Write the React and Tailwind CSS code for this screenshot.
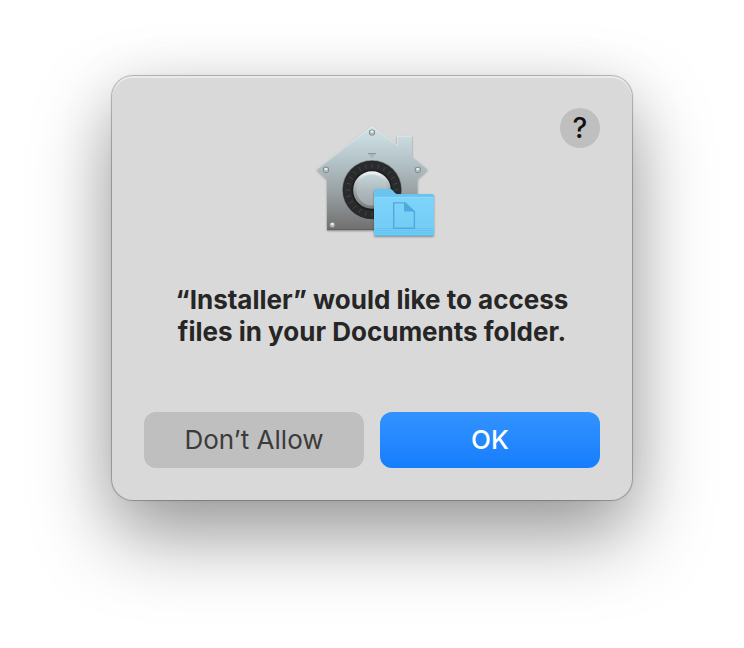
import React from 'react';

const screws = [
  { x: 64, y: 16.5 },
  { x: 18, y: 53.8 },
  { x: 109.8, y: 53.8 },
  { x: 24.3, y: 108.8 },
];

const ticks = Array.from({ length: 24 }, (_, i) => (i * 360) / 24);

const DocumentsIcon = () => (
  <svg viewBox="0 0 128 128" className="mt-2 h-32 w-32" aria-hidden="true">
    <defs>
      <linearGradient id="house" x1="0" y1="0" x2="0" y2="1">
        <stop offset="0" stopColor="#d3e6ea" />
        <stop offset="0.35" stopColor="#b3c2c7" />
        <stop offset="0.65" stopColor="#979fa2" />
        <stop offset="1" stopColor="#716e6d" />
      </linearGradient>
      <linearGradient id="rim" x1="0" y1="0" x2="0" y2="1">
        <stop offset="0" stopColor="#f4fafb" />
        <stop offset="0.25" stopColor="#c3cbce" />
        <stop offset="0.6" stopColor="#969c9f" />
        <stop offset="1" stopColor="#7b7e80" />
      </linearGradient>
      <linearGradient id="knob" x1="0" y1="0" x2="0" y2="1">
        <stop offset="0" stopColor="#c4d5da" />
        <stop offset="0.5" stopColor="#b0bbbf" />
        <stop offset="1" stopColor="#a2a8ab" />
      </linearGradient>
      <linearGradient id="folder" x1="0" y1="0" x2="0" y2="1">
        <stop offset="0" stopColor="#7ed3fa" />
        <stop offset="1" stopColor="#70cbf5" />
      </linearGradient>
      <filter id="drop" x="-10%" y="-10%" width="120%" height="120%">
        <feDropShadow dx="0" dy="1" stdDeviation="1" floodColor="#000" floodOpacity="0.35" />
      </filter>
    </defs>

    {/* House */}
    <path
      d="M64 9.7 L89 28.7 V19.7 H104 V41 L119.6 53.5 L109.5 63 V114 H19 V63 L8.7 53.5 Z"
      fill="url(#house)"
      filter="url(#drop)"
    />
    <path d="M9.5 53 L64 10.4 L89.4 29.7 V20.2 H103.6" fill="none" stroke="#e7f4f7" strokeOpacity="0.6" strokeWidth="0.8" />
    <path d="M19 113.6 H70" stroke="#5c5b5b" strokeWidth="0.8" />

    {screws.map((s) => (
      <g key={`${s.x}-${s.y}`}>
        <circle cx={s.x} cy={s.y} r="3.1" fill="#7b8487" />
        <circle cx={s.x} cy={s.y + 0.1} r="2.3" fill="#b4bcbe" />
        <ellipse cx={s.x} cy={s.y - 0.8} rx="1.6" ry="1.1" fill="#eef2f3" />
      </g>
    ))}
    <path d="M60.5 37.6 H67.5 L65.2 41.8 H62.8 Z" fill="#aab8bc" />
    <path d="M60 37.6 H68" stroke="#808c90" strokeWidth="0.9" />

    {/* Dial */}
    <circle cx="64" cy="74" r="30" fill="#7d8486" />
    <circle cx="64" cy="74" r="29.3" fill="#292a2b" />
    {ticks.map((angle) => (
      <path
        key={angle}
        d="M64 47.5 V52"
        stroke="#47494a"
        strokeWidth="0.8"
        transform={`rotate(${angle} 64 74)`}
      />
    ))}
    <circle cx="64" cy="74" r="20.5" fill="#1d1e1f" />
    <circle cx="64" cy="74" r="18.8" fill="url(#rim)" />
    <circle cx="64" cy="74" r="15.4" fill="url(#knob)" />

    {/* Folder */}
    <g filter="url(#drop)">
      <path
        d="M66 75 Q66 73 68 73 H82 Q83.5 73 84.5 74.2 L86.8 76.8 Q87.8 78 89.5 78 H124 Q126 78 126 80 V118 Q126 120 124 120 H68 Q66 120 66 118 Z"
        fill="#69c4f0"
      />
      <path
        d="M66 83 Q66 81 68 81 H124 Q126 81 126 83 V118 Q126 120 124 120 H68 Q66 120 66 118 Z"
        fill="url(#folder)"
      />
    </g>
    <path d="M67 81.3 H125" stroke="#93dcfc" strokeWidth="0.7" />
    <path d="M66 112.5 H126 M66 114.7 H126 M66 117 H126" stroke="#60bbe8" strokeWidth="0.6" />
    <path d="M66.5 119.6 H125.5" stroke="#58acd7" strokeWidth="0.8" />
    <path
      d="M85.7 86.9 H97 L106.4 95.8 V112.3 H85.7 Z"
      fill="none"
      stroke="#4ea9dc"
      strokeWidth="1.4"
    />
    <path d="M96 86.4 H97.4 L106.8 95.4 H96 Z" fill="#4ea9dc" />
  </svg>
);

const PermissionDialog = () => (
  <div
    role="dialog"
    aria-labelledby="dialog-title"
    className="w-full max-w-[520px] rounded-[21px] bg-[#d9d9d9] p-8 shadow-[inset_0_2px_0_rgba(255,255,255,0.45),0_0_0_1px_rgba(0,0,0,0.2),0_0_3px_rgba(0,0,0,0.15),0_36px_80px_rgba(0,0,0,0.38),0_8px_60px_rgba(0,0,0,0.08)]"
  >
    <div className="grid grid-cols-[1fr_auto_1fr] items-start">
      <span />
      <DocumentsIcon />
      <button
        type="button"
        aria-label="Help"
        className="h-10 w-10 justify-self-end rounded-full bg-[#bfbfbf] text-[28px] leading-10 font-medium text-[#111111]"
      >
        ?
      </button>
    </div>

    <h1 id="dialog-title" className="mt-10 text-center text-[26px] leading-8 font-bold text-[#262626]">
      “Installer” would like to access
      <br />
      files in your Documents folder.
    </h1>

    <div className="mt-16 grid grid-cols-2 gap-4">
      <button type="button" className="h-14 rounded-xl bg-[#bfbfbf] text-[26px] leading-8 text-[#3b3b3b]">
        Don’t Allow
      </button>
      <button
        type="button"
        className="h-14 rounded-xl bg-linear-to-b from-[#3293ff] to-[#157dfc] text-[26px] leading-8 font-medium text-white"
      >
        OK
      </button>
    </div>
  </div>
);

export default function App() {
  return (
    <main className="flex min-h-screen justify-center bg-white px-8 pt-19 pb-37 font-['Inter','Liberation_Sans',sans-serif]">
      <PermissionDialog />
    </main>
  );
}
